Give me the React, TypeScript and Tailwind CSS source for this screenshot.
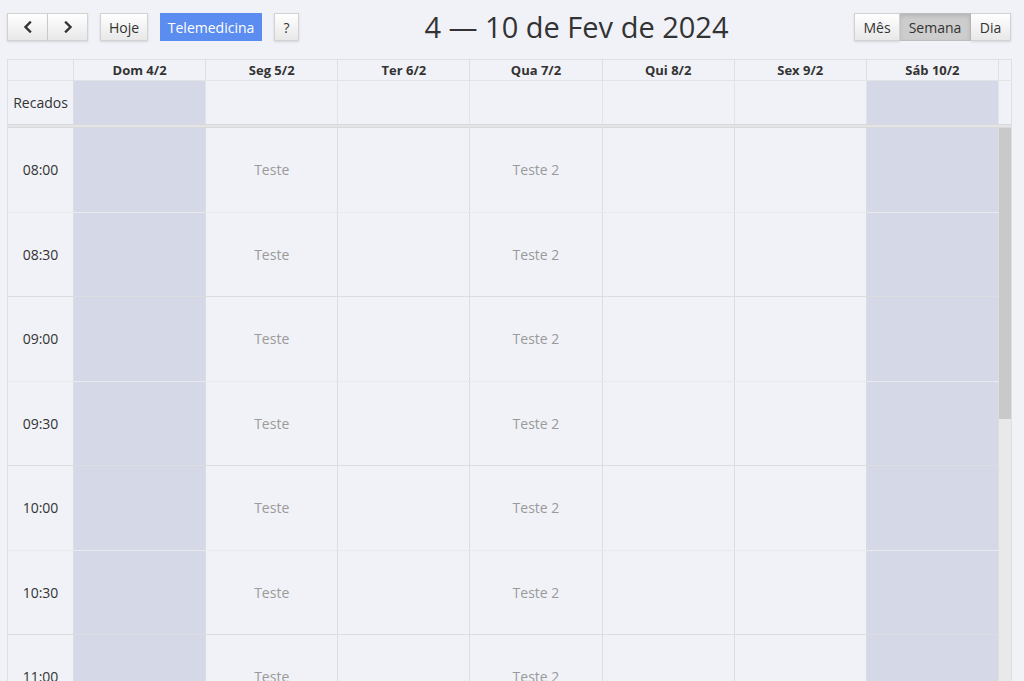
import React from "react";

const days = [
  { label: "Dom 4/2", weekend: true },
  { label: "Seg 5/2", weekend: false },
  { label: "Ter 6/2", weekend: false },
  { label: "Qua 7/2", weekend: false },
  { label: "Qui 8/2", weekend: false },
  { label: "Sex 9/2", weekend: false },
  { label: "Sáb 10/2", weekend: true },
];

const slots = ["08:00", "08:30", "09:00", "09:30", "10:00", "10:30", "11:00", "11:30"];

const events: Record<number, string> = { 1: "Teste", 3: "Teste 2" };

const btn =
  "h-7 px-2 text-[14px] text-[#333] bg-gradient-to-b from-white to-[#e8e8e8] border border-[#d2d2d2] shadow-[0_1px_2px_rgba(0,0,0,0.12)] flex items-center justify-center";

const Chevron = ({ dir }: { dir: "l" | "r" }) => (
  <svg width="10" height="12" viewBox="0 0 10 12" fill="none">
    <polyline
      points={dir === "l" ? "7,1.5 2.5,6 7,10.5" : "3,1.5 7.5,6 3,10.5"}
      stroke="#333"
      strokeWidth="2.4"
      strokeLinecap="square"
    />
  </svg>
);

const Toolbar = () => (
  <div className="flex pl-[7px] pr-[13px] pt-[13px] h-[59px] items-start">
    <div className="flex items-center gap-3 w-[292px]">
      <div className="flex">
        <button className={`${btn} w-[41px]`}>
          <Chevron dir="l" />
        </button>
        <button className={`${btn} w-[40px] border-l-0`}>
          <Chevron dir="r" />
        </button>
      </div>
      <button className={`${btn} w-[48px]`}>Hoje</button>
      <button className="h-7 w-[103px] text-[14px] text-white bg-[#5b8cef]">Telemedicina</button>
      <button className={`${btn} w-[25px] px-0`}>?</button>
    </div>
    <h1 className="flex-1 text-center text-[29px] leading-[30px] text-[#333] -mt-[1px]">
      4 — 10 de Fev de 2024
    </h1>
    <div className="flex w-[157px]">
      <button className={`${btn} w-[46px]`}>Mês</button>
      <button className="h-7 w-[71px] text-[14px] text-[#333] bg-[#cdcdcd] border border-[#bdbdbd] border-l-0 shadow-[inset_0_2px_4px_rgba(0,0,0,0.12)]">
        Semana
      </button>
      <button className={`${btn} w-[40px] border-l-0`}>Dia</button>
    </div>
  </div>
);

export default function App() {
  return (
    <div
      className="h-[681px] overflow-hidden bg-[#f1f2f7]"
      style={{ fontFamily: "'Open Sans', 'Noto Sans', sans-serif" }}
    >
      <Toolbar />
      <div className="ml-[7px] w-[1005px] border-l border-t border-[#dedfe3]">
        {/* header */}
        <div className="grid grid-cols-[66px_repeat(7,1fr)_13px] h-[21px] border-b border-[#e2e3e7]">
          <div className="border-r border-[#dedfe3]" />
          {days.map((d) => (
            <div
              key={d.label}
              className="border-r border-[#dedfe3] text-center text-[13px] font-bold text-[#333] leading-[20px]"
            >
              {d.label}
            </div>
          ))}
          <div className="border-r border-[#dedfe3]" />
        </div>
        {/* recados */}
        <div className="grid grid-cols-[66px_repeat(7,1fr)_13px] h-[43px]">
          <div className="border-r border-[#dedfe3] flex items-center justify-center text-[14px] text-[#333]">
            Recados
          </div>
          {days.map((d) => (
            <div
              key={d.label}
              className={`border-r border-[#e2e3e7] ${d.weekend ? "bg-[#d5d8e6]" : ""}`}
            />
          ))}
          <div className="border-r border-[#dedfe3]" />
        </div>
        <div className="h-[4px] bg-[#e4e4e6] border-y border-[#dadadd]" />
        {/* body */}
        <div className="flex">
          <div className="flex-1">
            {slots.map((s, i) => (
              <div
                key={s}
                className={`grid grid-cols-[66px_repeat(7,1fr)] h-[84.5px] border-b ${
                  i % 2 === 0 ? "border-dotted border-[#e0e1e5]" : "border-solid border-[#dcdde1]"
                }`}
              >
                <div className="border-r border-[#dedfe3] flex items-center justify-center text-[14px] text-[#333]">
                  {s}
                </div>
                {days.map((d, j) => (
                  <div
                    key={d.label}
                    className={`border-r border-[#dcdde1] flex items-center justify-center text-[14px] text-[#9a9a9a] ${
                      d.weekend ? "bg-[#d5d8e6]" : ""
                    }`}
                  >
                    {events[j] ?? ""}
                  </div>
                ))}
              </div>
            ))}
          </div>
          <div className="w-[13px] bg-[#e9e9e9] border-r border-[#dedfe3]">
            <div className="h-[291px] bg-[#c9c9c9]" />
          </div>
        </div>
      </div>
    </div>
  );
}
